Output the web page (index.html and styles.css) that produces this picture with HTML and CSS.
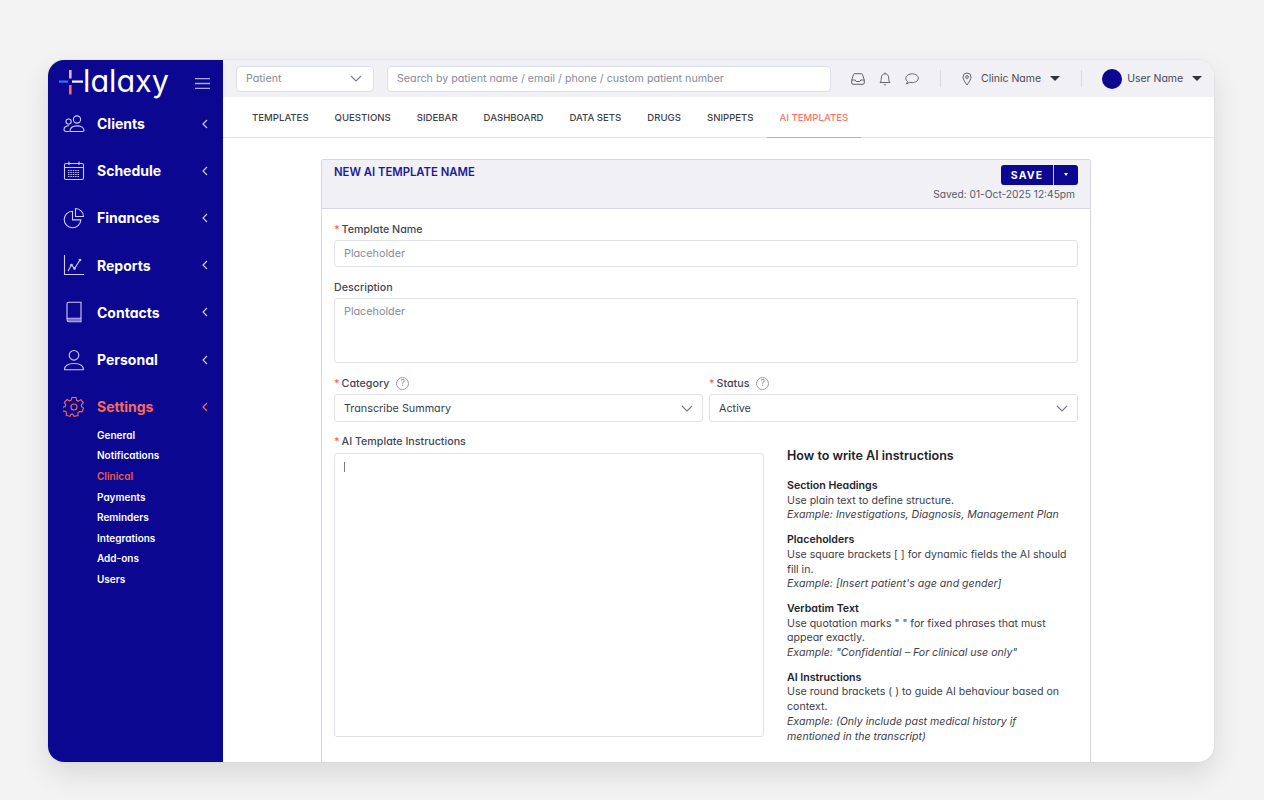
FILE: index.html
```html
<!DOCTYPE html>
<html>
<head>
	<meta charset="utf-8">
	<meta name="viewport" content="width=device-width, initial-scale=1">
	<title>Halaxy</title>
	<link rel="stylesheet" href="styles.css">
</head>
<body>
<div class="backdrop">
<div class="app">
   <aside class="sidebar">
      <div class="brand">
         <div class="logo">
            <svg class="logo-mark" width="24" height="25" viewBox="0 0 24 25">
               <rect x="0" y="10.5" width="9" height="2.2" fill="#3d6bff"/>
               <rect x="13" y="10.5" width="11" height="2.2" fill="#fff"/>
               <rect x="10" y="0" width="2.6" height="8.5" rx="0.5" fill="#d9b8f0"/>
               <rect x="10" y="15" width="2.6" height="9.5" rx="0.5" fill="#ff6b55"/>
            </svg>
            <span class="logo-text">lalaxy</span>
         </div>
         <svg class="burger" width="15" height="11" viewBox="0 0 15 11"><path d="M0 .7h15M0 5.5h15M0 10.3h15" stroke="#aeaae6" stroke-width="1.3"/></svg>
      </div>
      <nav class="nav">
         <a class="nav-item">
            <svg class="nav-icon" width="22" height="22" viewBox="0 0 22 22"><circle cx="14" cy="6.5" r="3.6"/><circle cx="5.6" cy="8.6" r="2.6"/><path d="M7 18.5c0-3.8 3-5.6 7-5.6s7 1.8 7 4.4c0 .8-.5 1.2-1.2 1.2z"/><path d="M6 12.8c-2.8 0-5 1.2-5 3.5 0 1.400.8 2.2 2 2.2h3"/></svg>
            <span class="nav-label">Clients</span>
            <svg class="chev" width="6" height="10" viewBox="0 0 6 10"><path d="M5 1 1 5l4 4"/></svg>
         </a>
         <a class="nav-item">
            <svg class="nav-icon" width="22" height="22" viewBox="0 0 22 22"><rect x="1.5" y="3.5" width="19" height="16" rx="1.5"/><path d="M1.5 7.5h19M6 1.5V5M16 1.5V5"/><path d="M5 10.500h12M5 12.500h12M5 14.500h12M5 16.500h12" stroke-dasharray="1.4 1"/></svg>
            <span class="nav-label">Schedule</span>
            <svg class="chev" width="6" height="10" viewBox="0 0 6 10"><path d="M5 1 1 5l4 4"/></svg>
         </a>
         <a class="nav-item">
            <svg class="nav-icon" width="22" height="22" viewBox="0 0 22 22"><path d="M9.5 4.2a8.3 8.3 0 1 0 8.3 8.7H9.5z"/><path d="M12.5 1.500a8 8 0 0 1 8 8h-8z"/></svg>
            <span class="nav-label">Finances</span>
            <svg class="chev" width="6" height="10" viewBox="0 0 6 10"><path d="M5 1 1 5l4 4"/></svg>
         </a>
         <a class="nav-item">
            <svg class="nav-icon" width="22" height="22" viewBox="0 0 22 22"><path d="M1.5 1v19.5H21"/><path d="m5 17 3.5-6 3 3.5L17 6"/><circle cx="8.5" cy="11" r=".8"/><circle cx="11.5" cy="14.5" r=".8"/><circle cx="17" cy="6" r=".8"/></svg>
            <span class="nav-label">Reports</span>
            <svg class="chev" width="6" height="10" viewBox="0 0 6 10"><path d="M5 1 1 5l4 4"/></svg>
         </a>
         <a class="nav-item">
            <svg class="nav-icon" width="22" height="22" viewBox="0 0 22 22"><path d="M4 18V3c0-1 .7-1.7 1.7-1.7H18v16H5.500C4.700 17.300 4 17.800 4 18.800s.7 1.900 1.700 1.900H18v-3.400"/><path d="M4.500 19h13"/></svg>
            <span class="nav-label">Contacts</span>
            <svg class="chev" width="6" height="10" viewBox="0 0 6 10"><path d="M5 1 1 5l4 4"/></svg>
         </a>
         <a class="nav-item">
            <svg class="nav-icon" width="22" height="22" viewBox="0 0 22 22"><circle cx="11" cy="6.3" r="4.8"/><path d="M1.5 20.800c0-4.300 3.800-6.300 9.500-6.300s9.500 2 9.500 6.300z"/></svg>
            <span class="nav-label">Personal</span>
            <svg class="chev" width="6" height="10" viewBox="0 0 6 10"><path d="M5 1 1 5l4 4"/></svg>
         </a>
         <a class="nav-item active">
            <svg class="nav-icon" width="22" height="22" viewBox="0 0 22 22"><path d="M9 1.5h4l.6 2.800 1.800.8 2.500-1.500 2.500 3.200-2 2 .1 1.700 2 1.600-1.500 3.700-2.700-.3-1.400 1.300.1 2.700-3.900.9-1.400-2.300h-1.600L7 20.400l-3.800-1.200.4-2.800-1.300-1.300-2.700.2 0-4 2.600-.8.5-1.800L1.300 6.400l2.800-2.900 2.300 1.500 1.800-.8z"/><circle cx="11" cy="11" r="3"/></svg>
            <span class="nav-label">Settings</span>
            <svg class="chev" width="6" height="10" viewBox="0 0 6 10"><path d="M5 1 1 5l4 4"/></svg>
         </a>
      </nav>
      <ul class="subnav">
         <li>General</li>
         <li>Notifications</li>
         <li class="current">Clinical</li>
         <li>Payments</li>
         <li>Reminders</li>
         <li>Integrations</li>
         <li>Add-ons</li>
         <li>Users</li>
      </ul>
   </aside>
   <div class="main">
      <header class="topbar">
         <div class="box patient-select">
            <span>Patient</span>
            <svg class="caret-line" width="12" height="7" viewBox="0 0 12 7"><path d="m1 1 5 5 5-5"/></svg>
         </div>
         <div class="box search">Search by patient name / email / phone / custom patient number</div>
         <div class="top-icons">
            <svg width="14" height="12" viewBox="0 0 14 12"><path d="M.7 7 2.5 1.5c.2-.5.5-.8 1-.8h7c.5 0 .8.3 1 .8L13.3 7v3c0 .8-.5 1.300-1.300 1.300H2c-.8 0-1.300-.5-1.300-1.300z"/><path d="M.7 7h3.500l1 1.500h3.600l1-1.500h3.500"/></svg>
            <svg width="12" height="14" viewBox="0 0 12 14"><path d="M1 10.500c1-1 1.300-2 1.300-4.500S3.800 1.800 6 1.800 9.700 3.500 9.700 6s.3 3.500 1.300 4.500z"/><path d="M6 .5v1.300M4.800 12.300c.3.700 2.100.7 2.400 0"/></svg>
            <svg width="14" height="12" viewBox="0 0 14 12"><path d="M7.300.8c3.300 0 6 1.900 6 4.400s-2.700 4.400-6 4.400c-.9 0-1.800-.1-2.500-.4L1.500 11l1-2.600C1.400 7.600.8 6.500.8 5.200.8 2.700 4 .8 7.300.8z"/></svg>
         </div>
         <span class="top-sep"></span>
         <div class="top-menu clinic">
            <svg class="pin" width="10" height="14" viewBox="0 0 10 14"><path d="M5 13C3 10 1 7.500 1 5a4 4 0 0 1 8 0c0 2.500-2 5-4 8z"/><circle cx="5" cy="5" r="1.400"/></svg>
            <span>Clinic Name</span>
            <i class="caret"></i>
         </div>
         <span class="top-sep"></span>
         <div class="top-menu user">
            <span class="avatar"></span>
            <span>User Name</span>
            <i class="caret"></i>
         </div>
      </header>
      <nav class="tabs">
         <a class="tab">TEMPLATES</a>
         <a class="tab">QUESTIONS</a>
         <a class="tab">SIDEBAR</a>
         <a class="tab">DASHBOARD</a>
         <a class="tab">DATA SETS</a>
         <a class="tab">DRUGS</a>
         <a class="tab">SNIPPETS</a>
         <a class="tab active">AI TEMPLATES</a>
      </nav>
      <div class="content">
         <section class="card">
            <div class="card-head">
               <h2>NEW AI TEMPLATE NAME</h2>
               <div class="save-area">
                  <div class="save-btn"><span class="save-label">SAVE</span><span class="save-more"></span></div>
                  <div class="saved-at">Saved: 01-Oct-2025 12:45pm</div>
               </div>
            </div>
            <div class="card-body">
               <label class="field-label"><b>*</b>Template Name</label>
               <div class="input">Placeholder</div>

               <label class="field-label desc-label">Description</label>
               <div class="input area">Placeholder</div>

               <div class="two-col">
                  <div>
                     <label class="field-label"><b>*</b>Category <span class="help">?</span></label>
                     <div class="input select">Transcribe Summary
                        <svg class="caret-line" width="12" height="7" viewBox="0 0 12 7"><path d="m1 1 5 5 5-5"/></svg>
                     </div>
                  </div>
                  <div>
                     <label class="field-label"><b>*</b>Status <span class="help">?</span></label>
                     <div class="input select">Active
                        <svg class="caret-line" width="12" height="7" viewBox="0 0 12 7"><path d="m1 1 5 5 5-5"/></svg>
                     </div>
                  </div>
               </div>

               <div class="instructions">
                  <div class="instr-left">
                     <label class="field-label"><b>*</b>AI Template Instructions</label>
                     <div class="input editor"><i class="cursor"></i></div>
                  </div>
                  <div class="guide">
                     <h3>How to write AI instructions</h3>
                     <p><strong>Section Headings</strong><br>Use plain text to define structure.<br><em>Example: Investigations, Diagnosis, Management Plan</em></p>
                     <p><strong>Placeholders</strong><br>Use square brackets [ ] for dynamic fields the AI should fill in.<br><em>Example: [Insert patient's age and gender]</em></p>
                     <p><strong>Verbatim Text</strong><br>Use quotation marks " " for fixed phrases that must appear exactly.<br><em>Example: "Confidential – For clinical use only"</em></p>
                     <p><strong>AI Instructions</strong><br>Use round brackets ( ) to guide AI behaviour based on context.<br><em>Example: (Only include past medical history if mentioned in the transcript)</em></p>
                  </div>
               </div>
            </div>
         </section>
      </div>
   </div>
</div>
</div>
</body>
</html>
```

FILE: styles.css
```css
body {
   margin: 0;
   background: #fff;
   font-family: Inter, "Liberation Sans", sans-serif;
   font-size: 11px;
   font-feature-settings: "cv11";
   color: #3d3d4a;
   overflow: hidden;
}

.backdrop {
   height: 800px;
   box-sizing: border-box;
   padding: 60px 50px 38px 48px;
   background: #f3f3f3;
}

.app {
   display: flex;
   height: 702px;
   border-radius: 16px;
   overflow: hidden;
   background: #fff;
   box-shadow: 0 12px 28px rgba(0, 0, 0, 0.11), 0 0 2px rgba(0, 0, 0, 0.1);
}

/* sidebar */
.sidebar {
   width: 175px;
   flex-shrink: 0;
   background: #0c0790;
   color: #fff;
}

.brand {
   display: flex;
   align-items: center;
   justify-content: space-between;
   height: 40px;
   padding: 0 13px 0 11px;
}

.logo {
   display: flex;
   align-items: center;
   margin-top: 2px;
}

.logo-mark {
   margin-top: 3px;
}

.logo-text {
   font-size: 30.5px;
   font-weight: 400;
   line-height: 30px;
}

.burger {
   margin-top: 6px;
}

.nav {
   display: flex;
   flex-direction: column;
}

.nav-item {
   display: flex;
   align-items: center;
   height: 47.2px;
   padding: 0 15px;
}

.nav-icon {
   flex-shrink: 0;
   fill: none;
   stroke: #cfccf3;
   stroke-width: 1.1;
}

.nav-label {
   flex: 1;
   margin-left: 12px;
   font-size: 14px;
   font-weight: 700;
}

.chev {
   fill: none;
   stroke: #cfccf3;
   stroke-width: 1.2;
}

.nav-item.active .nav-label {
   color: #fa6a58;
}

.nav-item.active .nav-icon,
.nav-item.active .chev {
   stroke: #fa6a58;
}

.subnav {
   list-style: none;
   margin: -5.5px 0 0;
   padding: 0 0 0 49px;
   font-size: 10px;
   font-weight: 600;
}

.subnav li {
   height: 20.6px;
   line-height: 20.6px;
}

.subnav .current {
   color: #ea5f50;
}

/* top bar */
.main {
   flex: 1;
   min-width: 0;
   display: flex;
   flex-direction: column;
}

.topbar {
   display: flex;
   align-items: center;
   height: 37px;
   flex-shrink: 0;
   padding-left: 13px;
   background: #f0f0f5;
}

.box {
   display: flex;
   align-items: center;
   box-sizing: border-box;
   height: 26px;
   padding: 0 9px;
   background: #fff;
   border: 1px solid #d9deea;
   border-radius: 4px;
   color: #878a99;
   font-size: 10.7px;
}

.patient-select {
   width: 138px;
   justify-content: space-between;
   padding-right: 11px;
}

.search {
   width: 444px;
   margin-left: 13px;
}

.caret-line {
   fill: none;
   stroke: #777a88;
   stroke-width: 1.1;
}

.top-icons {
   display: flex;
   align-items: center;
   gap: 14px;
   margin-left: 20px;
}

.top-icons svg,
.pin {
   fill: none;
   stroke: #55555f;
   stroke-width: 0.9;
}

.top-sep {
   width: 1px;
   height: 17px;
   margin-left: 21px;
   background: #d8d8e0;
}

.top-menu {
   display: flex;
   align-items: center;
   color: #4a4a55;
   font-size: 10.5px;
}

.clinic {
   margin-left: 21px;
}

.clinic + .top-sep {
   margin-left: 21px;
}

.clinic .pin {
   margin-right: 9px;
}

.user {
   margin-left: 20px;
}

.avatar {
   width: 20px;
   height: 20px;
   margin-right: 5px;
   border-radius: 50%;
   background: #0c0790;
}

.caret {
   width: 0;
   height: 0;
   margin-left: 9px;
   border-left: 5px solid transparent;
   border-right: 5px solid transparent;
   border-top: 5px solid #33333c;
}

/* tabs */
.tabs {
   display: flex;
   height: 41px;
   flex-shrink: 0;
   box-sizing: border-box;
   padding-left: 16px;
   border-bottom: 1px solid #e2e3ea;
}

.tab {
   display: flex;
   align-items: center;
   padding: 0 13px;
   margin-bottom: -1px;
   color: #3f3f4a;
   font-size: 9.6px;
   font-weight: 500;
   border-bottom: 1px solid transparent;
}

.tab.active {
   color: #f8746a;
   border-bottom-color: #f8958c;
}

/* form card */
.content {
   flex: 1;
   min-height: 0;
   padding: 21px 123px 0 98px;
}

.card {
   height: 100%;
   box-sizing: border-box;
   border: 1px solid #d5d8e3;
   border-bottom: none;
   border-radius: 3px 3px 0 0;
}

.card-head {
   display: flex;
   justify-content: space-between;
   box-sizing: border-box;
   height: 49px;
   padding: 5px 12px 0 12px;
   background: #f0f0f5;
   border-bottom: 1px solid #d5d8e3;
}

.card-head h2 {
   margin: 0;
   color: #1d1a9a;
   font-size: 11.3px;
   font-weight: 600;
   line-height: 14px;
}

.save-area {
   display: flex;
   flex-direction: column;
   align-items: flex-end;
}

.save-btn {
   display: flex;
   height: 20px;
   background: #0c0790;
   border-radius: 3px;
   color: #fff;
}

.save-label {
   width: 52px;
   line-height: 21px;
   text-align: center;
   font-size: 10.5px;
   font-weight: 700;
   letter-spacing: 1.1px;
   border-right: 1px solid #c9c8e8;
}

.save-more {
   position: relative;
   width: 24px;
}

.save-more::after {
   content: "";
   position: absolute;
   left: 10px;
   top: 8px;
   border-left: 2.5px solid transparent;
   border-right: 2.5px solid transparent;
   border-top: 3px solid #fff;
}

.saved-at {
   margin: 2px 3px 0 0;
   color: #5a5a66;
   font-size: 10.2px;
   line-height: 14px;
}

.card-body {
   padding: 15px 12px 0;
}

.field-label {
   display: block;
   height: 11px;
   line-height: 11px;
   color: #444654;
   font-size: 10.7px;
   font-weight: 500;
}

.field-label b {
   margin-right: 2px;
   color: #f26a5b;
   font-weight: 500;
}

.input {
   box-sizing: border-box;
   height: 27px;
   margin-top: 5px;
   padding: 0 9px;
   line-height: 25px;
   background: #fff;
   border: 1px solid #dfe1ec;
   border-radius: 3px;
   color: #878a99;
   font-size: 10.8px;
}

.desc-label {
   margin-top: 15px;
}

.area {
   height: 65px;
}

.two-col {
   display: grid;
   grid-template-columns: 369px 369px;
   column-gap: 6px;
   margin-top: 15px;
}

.help {
   display: inline-block;
   box-sizing: border-box;
   width: 13px;
   height: 13px;
   margin: -1px 0 0 4px;
   line-height: 11px;
   text-align: center;
   vertical-align: middle;
   border: 1px solid #9a9ca8;
   border-radius: 50%;
   color: #8a8c98;
   font-size: 8.5px;
   font-weight: 400;
}

.select {
   display: flex;
   align-items: center;
   justify-content: space-between;
   height: 28px;
   padding-right: 9px;
   color: #3d3d4a;
}

.instructions {
   display: flex;
   margin-top: 14px;
}

.instr-left {
   width: 430px;
   flex-shrink: 0;
}

.editor {
   height: 284px;
   margin-top: 6px;
   padding-top: 8px;
   line-height: 12px;
}

.cursor {
   display: block;
   width: 1px;
   height: 10px;
   background: #77798a;
}

.guide {
   flex: 1;
   min-width: 0;
   margin: 12px 0 0 23px;
   padding-right: 8px;
   color: #3d3d4a;
   font-size: 10.6px;
   line-height: 14.7px;
}

.guide h3 {
   margin: 0 0 15px;
   color: #23232e;
   font-size: 12.5px;
   font-weight: 600;
   line-height: 16px;
}

.guide p {
   margin: 0 0 10px;
}

.guide strong {
   color: #23232e;
   font-weight: 600;
}
```
